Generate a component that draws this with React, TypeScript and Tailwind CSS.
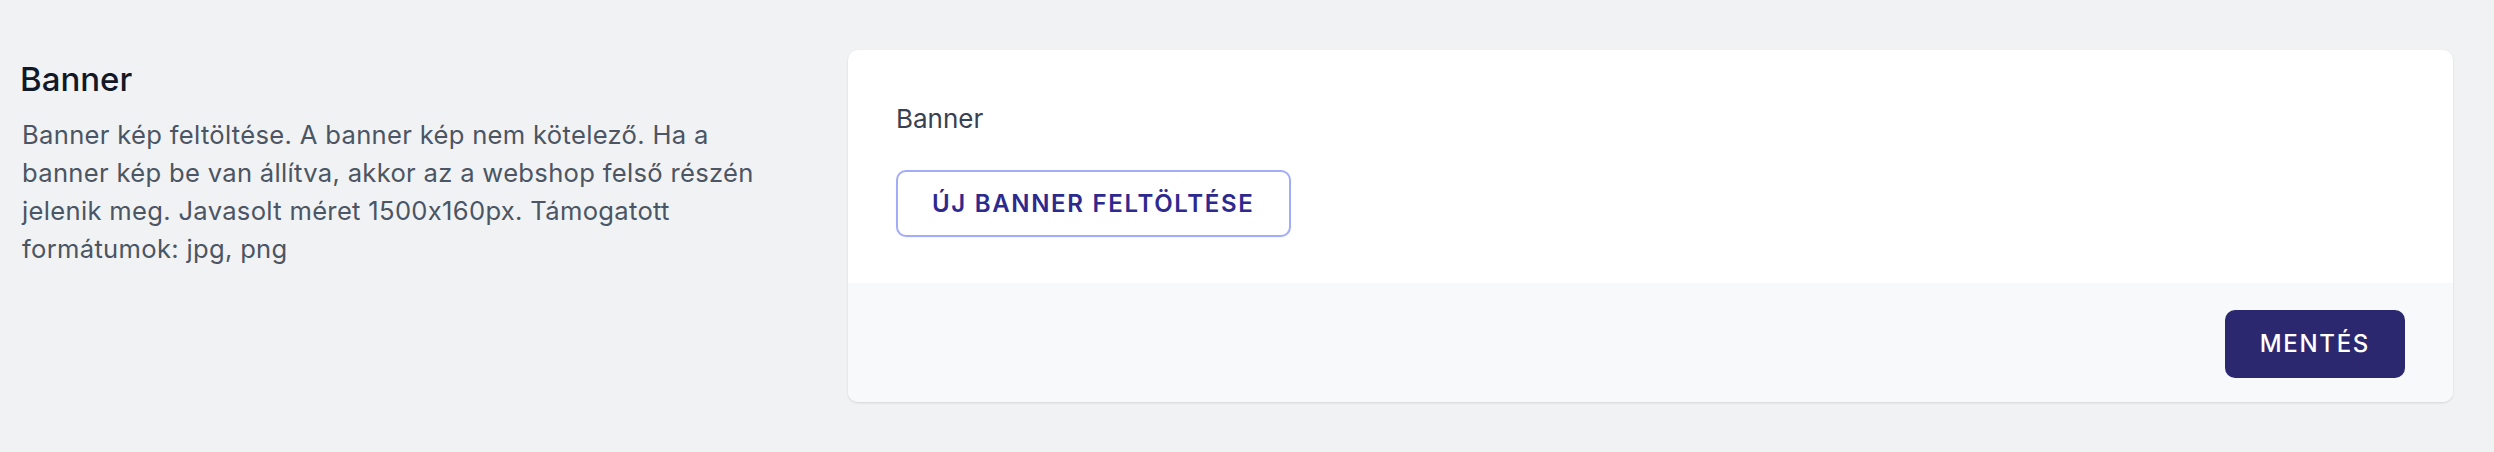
import React from "react";

export default function App() {
  return (
    <div className="min-h-screen bg-[#f1f2f4] font-['Inter',sans-serif] [font-feature-settings:'calt'_0] pt-[50px] pl-[20px] pr-[41px] flex gap-[51px] antialiased">
      <div className="w-[777px] shrink-0 pt-[9px]">
        <h3 className="text-[33px] leading-[40px] font-medium text-[#111827]">Banner</h3>
        <p className="mt-[17px] max-w-[750px] text-[25.6px] leading-[38px] tracking-[0.012em] text-[#4b5563] pl-[2px]">
          Banner kép feltöltése. A banner kép nem kötelező. Ha a banner kép be van állítva, akkor az a webshop felső
          részén jelenik meg. Javasolt méret 1500x160px. Támogatott formátumok: jpg, png
        </p>
      </div>
      <div className="flex-1 self-start rounded-[10px] bg-white shadow-[0_1px_3px_rgba(0,0,0,0.08),0_1px_2px_rgba(0,0,0,0.05)] overflow-hidden">
        <div className="px-[48px] pt-[50px] pb-[46px]">
          <label className="block text-[26px] leading-[38px] text-[#374151]">Banner</label>
          <button className="mt-[32px] h-[67px] px-[34px] rounded-[10px] border-2 border-[#a3acf7] bg-white text-[#2d2a8f] text-[24px] leading-none tracking-[0.07em] font-semibold shadow-[0_1px_2px_rgba(0,0,0,0.05)]">
            ÚJ BANNER FELTÖLTÉSE
          </button>
        </div>
        <div className="bg-[#f8f9fa] px-[48px] pt-[27px] pb-[24px] flex justify-end">
          <button className="h-[68px] px-[35px] rounded-[10px] bg-[#2c2870] text-white text-[24px] leading-none tracking-[0.07em] font-medium">
            MENTÉS
          </button>
        </div>
      </div>
    </div>
  );
}
